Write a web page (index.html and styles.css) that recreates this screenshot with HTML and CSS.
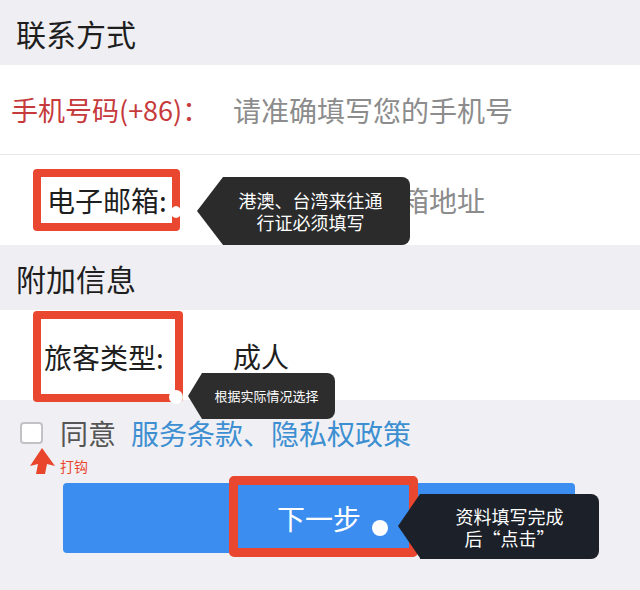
FILE: index.html
```html
<!DOCTYPE html>
<html lang="zh-CN">
<head>
<meta charset="utf-8">
<title>联系方式</title>
<link rel="stylesheet" href="styles.css">
</head>
<body>
<div class="page">
  <div class="sec-title">联系方式</div>
  <div class="row row-line">
    <span class="label-phone">手机号码(+86)：</span>
    <span class="ph">请准确填写您的手机号</span>
  </div>
  <div class="row">
    <span class="boxed email">电子邮箱:</span>
    <span class="ph">请准确填写邮箱地址</span>
  </div>
  <div class="sec-title">附加信息</div>
  <div class="row">
    <span class="boxed traveler">旅客类型:</span>
    <span class="val">成人</span>
  </div>
  <div class="agree">
    <span class="checkbox"></span>
    <span class="agree-text">同意</span>
    <span class="link">服务条款、隐私权政策</span>
  </div>
  <div class="hint">
    <svg class="arrow" width="26" height="28" viewBox="0 0 26 28"><path d="M12 1 L25 19 L17 17 L15 27 L6 27 L8 17 L0 19 Z" fill="#e8452c"/></svg>
    <span class="hint-text">打钩</span>
  </div>
  <div class="btn-wrap">
    <div class="btn">下一步</div>
  </div>

  <div class="mark-box"></div>
  <span class="dot dot-email"></span>
  <span class="dot dot-traveler"></span>
  <span class="dot dot-btn"></span>
  <div class="tip tip-email"><span>港澳、台湾来往通<br>行证必须填写</span></div>
  <div class="tip tip-traveler"><span>根据实际情况选择</span></div>
  <div class="tip tip-btn"><span>资料填写完成<br>后“点击”</span></div>
</div>
</body>
</html>
```
FILE: styles.css
```css
* { box-sizing: border-box; }
html, body { margin: 0; padding: 0; }
body {
  width: 640px;
  height: 590px;
  overflow: hidden;
  background: #f0f0f4;
  font-family: "Noto Sans CJK SC", "Noto Sans", sans-serif;
}
.page {
  position: relative;
  width: 640px;
  height: 590px;
  background: #f0f0f4;
}
.sec-title {
  height: 65px;
  padding-left: 16px;
  display: flex;
  align-items: center;
  font-size: 30px;
  color: #1e1e1e;
  background: #efeff3;
}
.row {
  height: 90px;
  background: #fff;
  display: grid;
  grid-template-columns: 233px 1fr;
  align-items: center;
  font-size: 28px;
}
.row-line { border-bottom: 1px solid #e8e8ea; }
.label-phone {
  margin-left: 11px;
  font-size: 27px;
  color: #c63a3c;
  white-space: nowrap;
}
.ph { color: #8c8c8c; white-space: nowrap; }
.val { color: #1e1e1e; }
.boxed {
  margin-left: 33px;
  border: 8px solid #e9472f;
  border-radius: 4px;
  color: #1e1e1e;
  display: flex;
  align-items: center;
  white-space: nowrap;
  position: relative;
  z-index: 1;
}
.email { width: 147px; height: 62px; padding-left: 6px; }
.traveler {
  width: 150px;
  height: 91px;
  padding-left: 3px;
  align-self: start;
  margin-top: 1px;
}
.agree {
  margin-top: 19px;
  height: 28px;
  padding-left: 20px;
  display: flex;
  align-items: center;
  font-size: 28px;
}
.checkbox {
  width: 23px;
  height: 22px;
  border: 2px solid #c2c2c6;
  border-radius: 4px;
  background: #fff;
}
.agree-text { margin-left: 17px; color: #555; }
.link { margin-left: 15px; color: #3d8fd1; }
.hint {
  height: 28px;
  padding-left: 30px;
  display: flex;
  align-items: flex-start;
}
.arrow { display: block; }
.hint-text {
  margin-left: 4px;
  margin-top: 10px;
  font-size: 14px;
  line-height: 18px;
  color: #e8452c;
}
.btn-wrap { padding: 8px 65px 0 63px; }
.btn {
  height: 70px;
  border-radius: 4px;
  background: #3b8ef0;
  color: #fff;
  font-size: 28px;
  display: flex;
  align-items: center;
  justify-content: center;
}
.mark-box {
  position: absolute;
  left: 229px;
  top: 476px;
  width: 189px;
  height: 81px;
  border: 9px solid #e9472f;
  border-radius: 5px;
}
.dot {
  position: absolute;
  border-radius: 50%;
  background: #fff;
  z-index: 2;
}
.dot-email { left: 171px; top: 206px; width: 10px; height: 12px; }
.dot-traveler { left: 169px; top: 390px; width: 14px; height: 14px; }
.dot-btn { left: 372px; top: 520px; width: 16px; height: 16px; }
.tip {
  position: absolute;
  color: #fff;
  display: flex;
  align-items: center;
  justify-content: center;
  text-align: center;
  border-radius: 0 8px 8px 0;
  z-index: 3;
}
.tip::before {
  content: "";
  position: absolute;
  top: 0;
  right: 100%;
  border-style: solid;
  border-color: transparent;
}
.tip-email {
  left: 223px; top: 177px; width: 187px; height: 68px;
  background: #2b2b2c;
  font-size: 18px; line-height: 22px;
  padding-right: 12px;
}
.tip-email::before { border-width: 34px 26px 34px 0; border-right-color: #2b2b2c; }
.tip-traveler {
  left: 202px; top: 373px; width: 133px; height: 46px;
  background: #2d2d2e;
  font-size: 13px; line-height: 18px;
  padding-right: 4px;
}
.tip-traveler::before { border-width: 23px 14px 23px 0; border-right-color: #2d2d2e; }
.tip-btn {
  left: 420px; top: 494px; width: 179px; height: 65px;
  background: #1c2029;
  font-size: 18px; line-height: 22px;
}
.tip-btn::before { border-width: 32.5px 22px 32.5px 0; border-right-color: #1c2029; }
```
